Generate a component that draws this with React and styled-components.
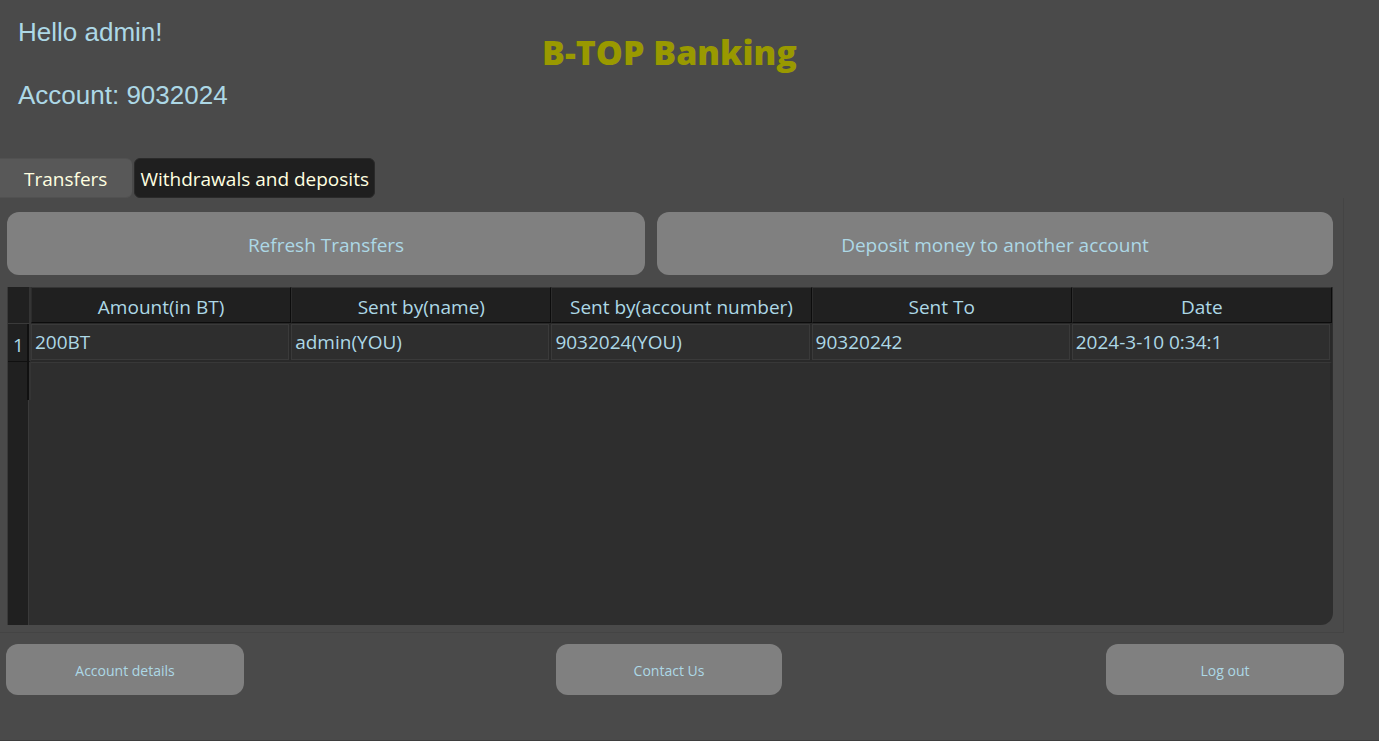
import React, { useState } from "react";
import styled, { createGlobalStyle } from "styled-components";

const GlobalStyle = createGlobalStyle`
  *, *::before, *::after { box-sizing: border-box; }
  body {
    margin: 0;
    background: #4a4a4a;
    color: #add8e6;
    font-family: "Segoe UI", "Open Sans", "Noto Sans", sans-serif;
  }
  button { font-family: inherit; color: inherit; cursor: pointer; }
`;

const Window = styled.div`
  display: flex;
  flex-direction: column;
  min-height: 100vh;
  border-bottom: 1px solid #3e3e3e;
`;

const Header = styled.header`
  display: grid;
  grid-template-columns: 1fr auto 1fr;
  align-items: start;
  height: 158px;
  padding: 16px 58px 0 18px;
`;

const Greeting = styled.div`
  display: flex;
  flex-direction: column;
  gap: 31px;
  font: 26px/32px Arial, "Liberation Sans", sans-serif;
`;

const Line = styled.p`
  margin: 0;
`;

const Title = styled.h1`
  margin: 0;
  padding-top: 14px;
  color: #999900;
  font-size: 34px;
  line-height: 44px;
  font-weight: 800;
`;

const TabList = styled.div`
  display: flex;
  gap: 2px;
`;

const Tab = styled.button`
  height: 40px;
  padding: 2px ${(p) => (p.$active ? 25 : 5)}px 0 ${(p) => (p.$active ? 24 : 5)}px;
  border: 1px solid ${(p) => (p.$active ? "#515151" : "#2a2a2a")};
  border-width: ${(p) => (p.$active ? "1px 0" : "1px")};
  border-radius: ${(p) => (p.$active ? "0 6px 6px 0" : "6px")};
  background: ${(p) => (p.$active ? "#585858" : "#1f1f1f")};
  color: #ffffe0;
  font-size: 19px;
  line-height: 28px;
`;

const Panel = styled.main`
  display: flex;
  flex: 1;
  flex-direction: column;
  gap: 12px;
  margin-right: 35px;
  padding: 14px 10px 7px 7px;
  border: solid #444444;
  border-width: 0 1px 1px 0;
`;

const Actions = styled.div`
  display: grid;
  grid-template-columns: 638fr 676fr;
  gap: 12px;
`;

const Button = styled.button`
  height: ${(p) => (p.$small ? 51 : 63)}px;
  width: ${(p) => p.$width || "auto"};
  padding: ${(p) => (p.$small ? 1 : 3)}px 12px 0;
  border: 0;
  border-radius: 12px;
  background: #808080;
  font-size: ${(p) => (p.$small ? 14 : 19)}px;
`;

const TableFrame = styled.div`
  flex: 1;
  overflow: hidden;
  padding-right: 1px;
  border-radius: 0 0 12px 0;
  border-left: 1px solid #3a3a3a;
  background: linear-gradient(to right, #202020 20px, #3a3a3a 20px 21px, #2e2e2e 21px);
`;

const Table = styled.table`
  width: 100%;
  table-layout: fixed;
  border-collapse: separate;
  border-spacing: 0;
  font-size: 19px;
  line-height: 28px;
`;

const ColumnHead = styled.th`
  height: 36px;
  padding: 4px 0 0;
  border: 1px solid #0c0c0c;
  border-top-color: #353535;
  border-left-color: #2c2c2c;
  background: #202020;
  font-weight: 400;
  text-align: center;
`;

const Corner = styled.td`
  width: 23px;
  border-right: 2px solid #343434;
  background: #202020;
`;

const RowHead = styled.th`
  height: 38px;
  padding: 5px 0 0;
  border: solid #101010;
  border-width: 1px 2px 1px 0;
  border-top-color: #3a3a3a;
  border-right-color: #343434;
  box-shadow: inset -2px 0 #101010;
  background: #202020;
  font-weight: 400;
  text-align: center;
`;

const Cell = styled.td`
  padding: 1px 2px 2px 0;
  background: #292929;
`;

const CellBox = styled.div`
  height: 36px;
  padding: 3px;
  border: 1px solid #3a3a3a;
  background: #2e2e2e;
  white-space: nowrap;
`;

const SpareHead = styled.td`
  height: 38px;
  border-right: 2px solid #343434;
  box-shadow: inset -2px 0 #101010;
`;

const SpareCell = styled.td`
  border-top: 1px solid #383838;
  border-right: 2px solid #292929;
`;

const Footer = styled.footer`
  display: grid;
  grid-template-columns: 550fr 550fr 238fr;
  padding: 11px 35px 45px 6px;
`;

const columns = ["Amount(in BT)", "Sent by(name)", "Sent by(account number)", "Sent To", "Date"];
const transfers = [["200BT", "admin(YOU)", "9032024(YOU)", "90320242", "2024-3-10 0:34:1"]];
const tabs = ["Transfers", "Withdrawals and deposits"];

export default function App() {
  const [active, setActive] = useState(0);
  return (
    <>
      <GlobalStyle />
      <Window>
        <Header>
          <Greeting>
            <Line>Hello admin!</Line>
            <Line>Account: 9032024</Line>
          </Greeting>
          <Title>B-TOP Banking</Title>
        </Header>
        <TabList role="tablist">
          {tabs.map((label, i) => (
            <Tab key={label} type="button" role="tab" aria-selected={active === i} $active={active === i} onClick={() => setActive(i)}>
              {label}
            </Tab>
          ))}
        </TabList>
        <Panel>
          <Actions>
            <Button type="button">Refresh Transfers</Button>
            <Button type="button">Deposit money to another account</Button>
          </Actions>
          <TableFrame>
            <Table>
              <thead>
                <tr>
                  <Corner />
                  {columns.map((name) => (
                    <ColumnHead key={name} scope="col">{name}</ColumnHead>
                  ))}
                </tr>
              </thead>
              <tbody>
                {transfers.map((row, i) => (
                  <tr key={i}>
                    <RowHead scope="row">{i + 1}</RowHead>
                    {row.map((value, j) => (
                      <Cell key={j}><CellBox>{value}</CellBox></Cell>
                    ))}
                  </tr>
                ))}
                <tr>
                  <SpareHead />
                  <SpareCell colSpan={5} />
                </tr>
              </tbody>
            </Table>
          </TableFrame>
        </Panel>
        <Footer>
          <Button type="button" $small $width="238px">Account details</Button>
          <Button type="button" $small $width="226px">Contact Us</Button>
          <Button type="button" $small>Log out</Button>
        </Footer>
      </Window>
    </>
  );
}
